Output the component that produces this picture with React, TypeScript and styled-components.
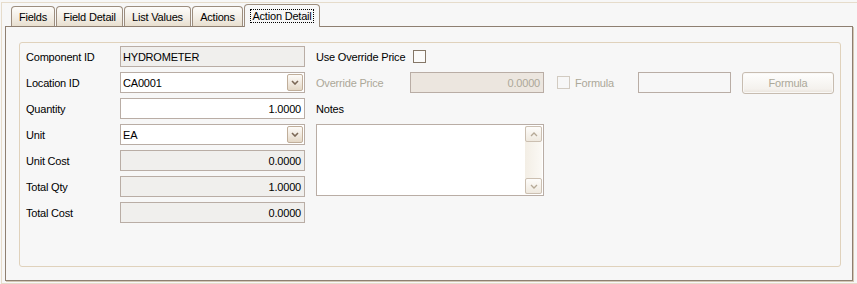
import React from "react";
import styled, { createGlobalStyle } from "styled-components";

const GlobalStyle = createGlobalStyle`
	html, body {
		margin: 0;
		padding: 0;
		background: #f7f7f7;
	}
	body {
		font-family: "Liberation Sans", Arial, sans-serif;
		font-size: 11px;
		letter-spacing: -0.2px;
		color: #000;
	}
	* {
		box-sizing: border-box;
	}
`;

type FieldKind = "edit" | "readonly" | "disabled" | "blank";

const tabs = [
	{ name: "Fields", width: 44 },
	{ name: "Field Detail", width: 67 },
	{ name: "List Values", width: 67 },
	{ name: "Actions", width: 51 },
	{ name: "Action Detail", width: 76, active: true },
];

const leftRows: Array<{ label: string; value: string; kind: FieldKind; align?: "left" | "right"; combo?: boolean }> = [
	{ label: "Component ID", value: "HYDROMETER", kind: "readonly" },
	{ label: "Location ID", value: "CA0001", kind: "edit", combo: true },
	{ label: "Quantity", value: "1.0000", kind: "edit", align: "right" },
	{ label: "Unit", value: "EA", kind: "edit", combo: true },
	{ label: "Unit Cost", value: "0.0000", kind: "readonly", align: "right" },
	{ label: "Total Qty", value: "1.0000", kind: "readonly", align: "right" },
	{ label: "Total Cost", value: "0.0000", kind: "readonly", align: "right" },
];

const Chevron: React.FC<{ up?: boolean; color: string; weight?: number }> = ({ up, color, weight = 1.3 }) => (
	<svg width="8" height="5" viewBox="0 0 8 5">
		<polyline
			points={up ? "1,4 4,1 7,4" : "1,1 4,4 7,1"}
			fill="none"
			stroke={color}
			strokeWidth={weight}
		/>
	</svg>
);

const App: React.FC = () => {
	return (
		<>
			<GlobalStyle />
			<Frame>
				<TabStrip>
					{tabs.map((tab) => (
						<Tab key={tab.name} $w={tab.width} $active={!!tab.active}>
							{tab.active ? <FocusText>{tab.name}</FocusText> : tab.name}
						</Tab>
					))}
				</TabStrip>
				<Panel>
					<GroupBox>
						{/* left column with the item fields */}
						<FormGrid>
							{leftRows.map((row) => (
								<React.Fragment key={row.label}>
									<Label>{row.label}</Label>
									<Field $kind={row.kind} $align={row.align || "left"} $w={185}>
										<FieldText>{row.value}</FieldText>
										{row.combo && (
											<ComboButton>
												<Chevron color="#7b6856" weight={1.6} />
											</ComboButton>
										)}
									</Field>
								</React.Fragment>
							))}
						</FormGrid>
						{/* right column: override price + notes */}
						<RightColumn>
							<Row>
								<Label $w={97}>Use Override Price</Label>
								<CheckBox />
							</Row>
							<Row>
								<Label $w={94} $disabled>
									Override Price
								</Label>
								<Field $kind="disabled" $align="right" $w={134}>
									<FieldText>0.0000</FieldText>
								</Field>
								<CheckBox $disabled $gap={13} />
								<Label $w={68} $disabled $pad={5}>
									Formula
								</Label>
								<Field $kind="blank" $align="left" $w={93} />
								<FormulaButton>Formula</FormulaButton>
							</Row>
							<Row>
								<Label>Notes</Label>
							</Row>
							<NotesBox>
								<ScrollBar>
									<ScrollButton>
										<Chevron up color="#b5a996" />
									</ScrollButton>
									<ScrollButton>
										<Chevron color="#b5a996" />
									</ScrollButton>
								</ScrollBar>
							</NotesBox>
						</RightColumn>
					</GroupBox>
				</Panel>
			</Frame>
		</>
	);
};

const Frame = styled.div`
	margin: 2px 0 0 1px;
	width: 856px;
	height: 282px;
	border-top: 1px solid #e6dccb;
	border-left: 1px solid #e6dccb;
	border-bottom: 1px solid #e6dccb;
	padding-left: 3px;
`;

const TabStrip = styled.div`
	display: flex;
	align-items: flex-end;
	gap: 1px;
	height: 23px;
	padding-left: 6px;
`;

const Tab = styled.div<{ $w: number; $active: boolean }>`
	position: relative;
	z-index: ${(p) => (p.$active ? 2 : 1)};
	width: ${(p) => p.$w}px;
	height: ${(p) => (p.$active ? 23 : 20)}px;
	margin-bottom: ${(p) => (p.$active ? -1 : 0)}px;
	border: 1px solid #9c8d7e;
	border-bottom: none;
	border-radius: 4px 4px 0 0;
	background: ${(p) =>
		p.$active ? "#f7f7f7" : "linear-gradient(#fdfcfa, #f1ece3 60%, #e8dfcf)"};
	display: flex;
	align-items: center;
	justify-content: center;
	padding-top: ${(p) => (p.$active ? 0 : 1)}px;
	white-space: nowrap;
`;

const FocusText = styled.span`
	outline: 1px dotted #000;
	outline-offset: 0;
	padding: 0 1px;
	line-height: 12px;
`;

const Panel = styled.div`
	width: 848px;
	height: 255px;
	border: 1px solid #8e7f71;
	box-shadow: 1px 1px 0 #d3c7b4;
	padding: 15px 0 0 13px;
`;

const GroupBox = styled.div`
	display: flex;
	gap: 11px;
	width: 822px;
	height: 225px;
	border: 1px solid #e0d2bc;
	border-radius: 3px;
	padding: 3px 0 0 6px;
`;

const FormGrid = styled.div`
	display: grid;
	grid-template-columns: 94px 185px;
	grid-auto-rows: 21px;
	row-gap: 5px;
	align-items: center;
	align-content: start;
`;

const Label = styled.div<{ $w?: number; $disabled?: boolean; $pad?: number }>`
	${(p) => (p.$w ? `width: ${p.$w}px; flex: none;` : "")}
	padding-left: ${(p) => p.$pad || 0}px;
	color: ${(p) => (p.$disabled ? "#aca899" : "#000")};
	white-space: nowrap;
`;

const fieldBg: Record<FieldKind, string> = {
	edit: "#ffffff",
	readonly: "#f0efed",
	disabled: "#ece6df",
	blank: "#f7f7f7",
};

const Field = styled.div<{ $kind: FieldKind; $align: "left" | "right"; $w: number }>`
	display: flex;
	align-items: center;
	width: ${(p) => p.$w}px;
	height: 21px;
	flex: none;
	border: 1px solid #b9ada5;
	background: ${(p) => fieldBg[p.$kind]};
	color: ${(p) => (p.$kind === "disabled" ? "#aca899" : "#000")};
	text-align: ${(p) => p.$align};
	padding: 0 1px 0 2px;
`;

const FieldText = styled.span`
	flex: 1;
	padding-right: 2px;
	white-space: nowrap;
	overflow: hidden;
`;

const ComboButton = styled.div`
	width: 16px;
	height: 17px;
	flex: none;
	border: 1px solid #c0ae9a;
	border-radius: 2px;
	background: linear-gradient(#fdfbf8, #efe7dc 60%, #e4d8c6);
	display: flex;
	align-items: center;
	justify-content: center;
`;

const RightColumn = styled.div`
	display: flex;
	flex-direction: column;
	gap: 5px;
`;

const Row = styled.div`
	display: flex;
	align-items: center;
	height: 21px;
`;

const CheckBox = styled.div<{ $disabled?: boolean; $gap?: number }>`
	width: 13px;
	height: 13px;
	flex: none;
	margin-left: ${(p) => p.$gap || 0}px;
	border: 1px solid ${(p) => (p.$disabled ? "#d2cbc1" : "#857767")};
	background: ${(p) => (p.$disabled ? "#f7f7f7" : "#fbfbfa")};
`;

const FormulaButton = styled.div`
	width: 92px;
	height: 22px;
	margin-left: 11px;
	flex: none;
	border: 1px solid #c7bcb0;
	border-radius: 3px;
	background: linear-gradient(#fefefd, #f4f1ed 80%, #e9e3da);
	box-shadow: inset 0 0 0 1px #f9f8f6;
	color: #aca899;
	display: flex;
	align-items: center;
	justify-content: center;
`;

const NotesBox = styled.div`
	width: 228px;
	height: 72px;
	border: 1px solid #b9ada5;
	background: #fff;
	display: flex;
	justify-content: flex-end;
	padding: 1px;
`;

const ScrollBar = styled.div`
	width: 17px;
	display: flex;
	flex-direction: column;
	justify-content: space-between;
	background: linear-gradient(90deg, #f3eee5, #fbf9f5);
`;

const ScrollButton = styled.div`
	height: 16px;
	border: 1px solid #cbbfb1;
	border-radius: 2px;
	background: linear-gradient(#fdfcfa, #efe9df);
	display: flex;
	align-items: center;
	justify-content: center;
`;

export default App;
